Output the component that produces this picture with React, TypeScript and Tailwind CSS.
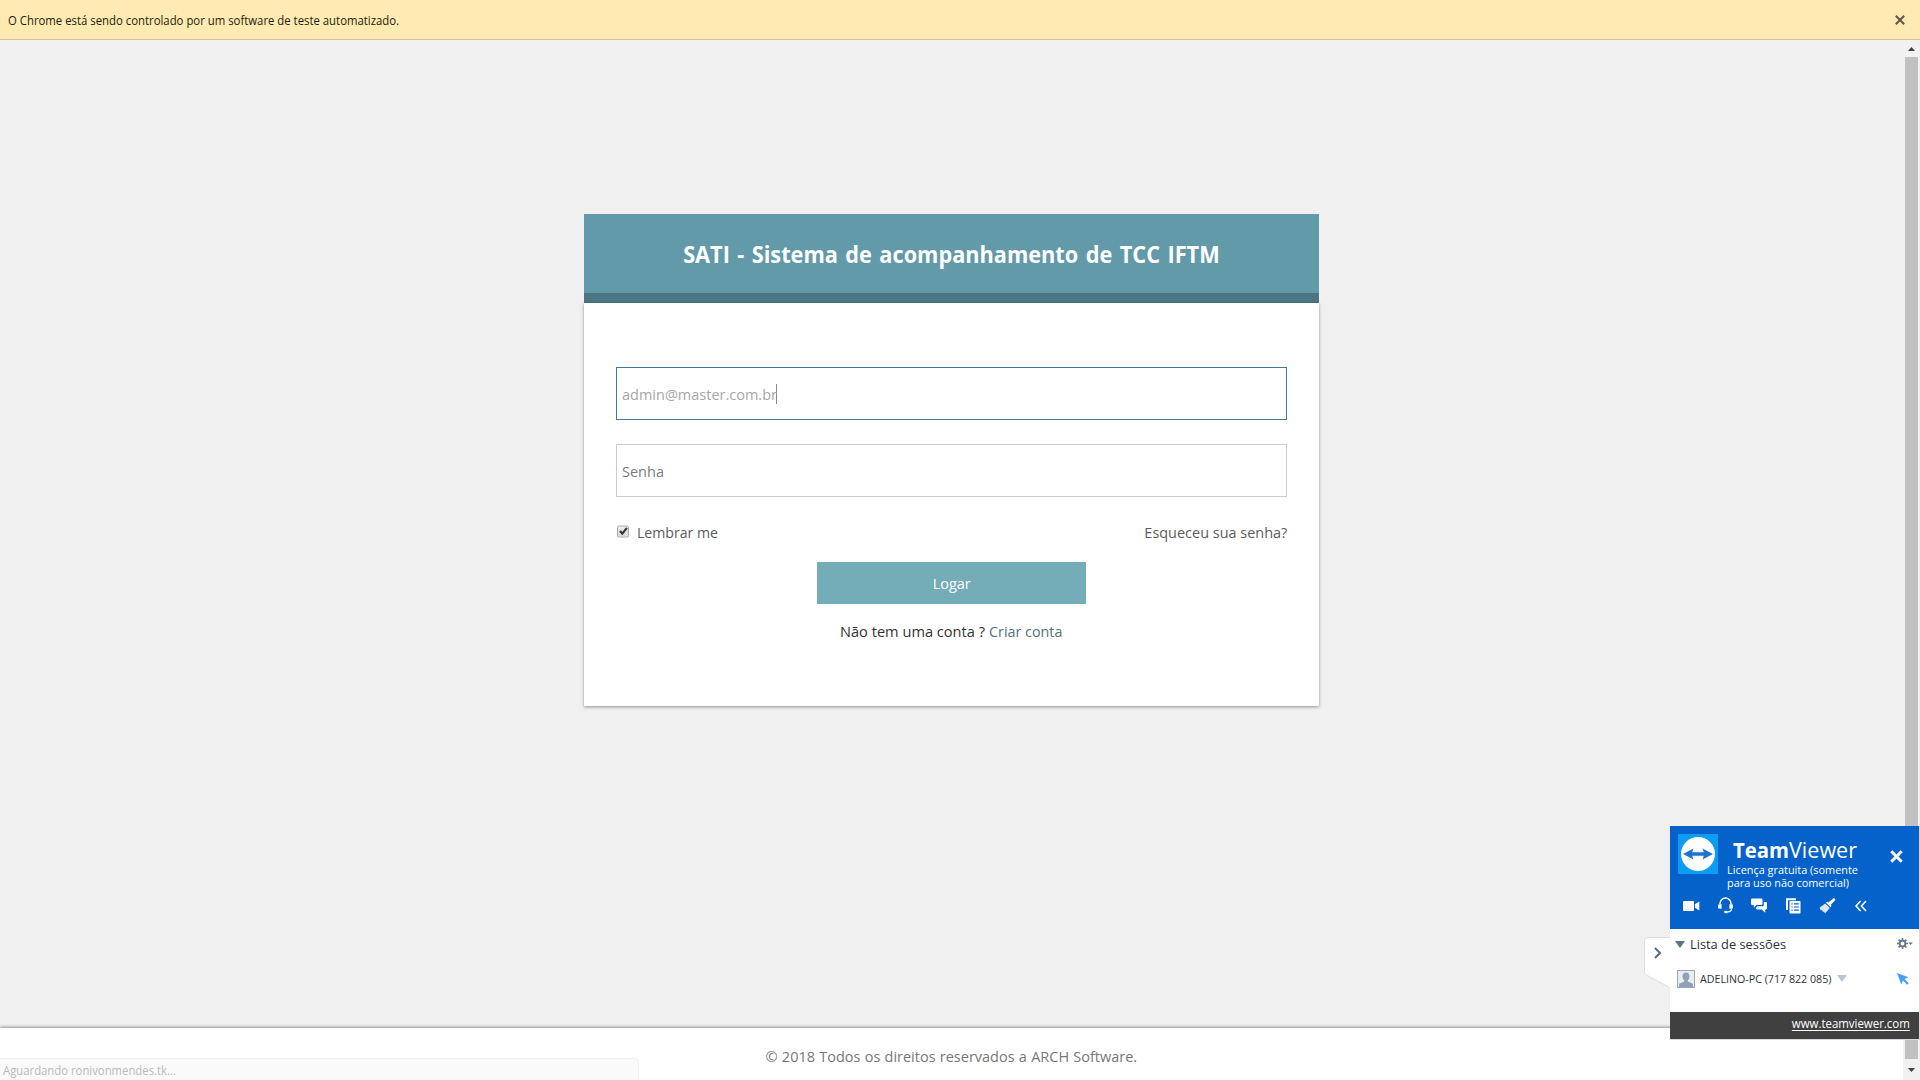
import type { ReactNode } from 'react';

function InfoBar() {
  return (
    <div className="flex h-10 shrink-0 items-center justify-between border-b border-[#cfc096] bg-[#ffeab2] pl-2 pr-[15px]">
      <span className="origin-left translate-y-px scale-x-[0.946] text-[12px] text-[#241d0c]">
        O Chrome está sendo controlado por um software de teste automatizado.
      </span>
      <svg width="10" height="10" viewBox="0 0 10 10" stroke="#5c5546" strokeWidth="2">
        <path d="M.8.8l8.4 8.4M9.2.8L.8 9.2" />
      </svg>
    </div>
  );
}

function Field({ active, children }: { active?: boolean; children: ReactNode }) {
  return (
    <div
      className={
        active
          ? 'flex h-[53px] items-center border border-[#46779a] pl-[5px] pt-px text-[15px] text-[#a6a6a6]'
          : 'flex h-[53px] items-center border border-[#cbcbcb] pl-[5px] pt-px text-[15px] text-[#7c7c7c]'
      }
    >
      {children}
    </div>
  );
}

function LoginCard() {
  return (
    <div className="w-[735px]">
      <div className="flex h-[89px] items-center justify-center border-b-10 border-[#4a7683] bg-[#639aa9]">
        <h1 className="scale-x-[0.905] whitespace-nowrap text-[24px] font-bold text-white [word-spacing:2px]">
          SATI - Sistema de acompanhamento de TCC IFTM
        </h1>
      </div>
      <div className="flex h-[403px] flex-col bg-white px-8 pt-16 shadow-[0_1px_3px_rgba(0,0,0,0.4)]">
        <Field active>
          <span className="w-[154px] origin-left scale-x-[0.966]">admin@master.com.br</span>
          <span className="h-5 w-px bg-[#8a8a8a]" />
        </Field>
        <div className="mt-6">
          <Field>
            <span className="origin-left scale-x-[0.968]">Senha</span>
          </Field>
        </div>
        <div className="mt-[25px] flex h-[21px] items-center text-[15px] text-[#5c5c5c]">
          <span className="mr-[9px] flex size-3 -translate-y-[1.5px] translate-x-px items-center justify-center rounded-[2px] border border-[#a5a5a5] bg-linear-to-b from-[#ededed] to-[#dadada]">
            <svg width="9" height="9" viewBox="0 0 9 9" className="shrink-0" fill="none" stroke="#363636" strokeWidth="2.2">
              <path d="M1 4.6l2.3 2.5L7.9 1.4" />
            </svg>
          </span>
          <span className="origin-left scale-x-[0.941]">Lembrar me</span>
          <span className="ml-auto origin-right scale-x-[0.964]">Esqueceu sua senha?</span>
        </div>
        <div className="mt-[19px] flex h-[42px] w-[269px] items-center justify-center self-center bg-[#74acb7] text-[15px] text-white">
          <span className="scale-x-[0.962]">Logar</span>
        </div>
        <div className="mt-4 flex h-[22px] w-[223px] items-center justify-between self-center whitespace-nowrap text-[15px] text-[#333]">
          <span className="w-[149px] origin-left scale-x-[0.974]">Não tem uma conta ?</span>
          <span className="w-[74px] origin-left scale-x-[0.955] text-[#56717a]">Criar conta</span>
        </div>
      </div>
    </div>
  );
}

function Scrollbar() {
  return (
    <div className="flex w-[17px] shrink-0 flex-col items-center bg-[#f1f1f1] pr-px">
      <div className="flex h-[17px] items-center">
        <svg width="7" height="4" viewBox="0 0 7 4" fill="#404040">
          <path d="M0 4h7L3.5 0z" />
        </svg>
      </div>
      <div className="w-[13px] grow bg-[#c1c1c1]" />
      <div className="flex h-[21px] items-center pt-px">
        <svg width="7" height="4" viewBox="0 0 7 4" fill="#404040">
          <path d="M0 0h7L3.5 4z" />
        </svg>
      </div>
    </div>
  );
}

function TeamViewerLogo() {
  return (
    <svg width="40" height="40" viewBox="0 0 40 40">
      <rect width="40" height="40" fill="#0b9cf4" />
      <circle cx="20" cy="20" r="17" fill="#fff" />
      <path d="M5 20l10.5-5.5-1.3 3.8h11.6l-1.3-3.8L35 20l-10.5 5.5 1.3-3.8H14.2l1.3 3.8z" fill="#1d74cf" />
    </svg>
  );
}

function Toolbar() {
  return (
    <div className="flex items-center text-white">
      <svg width="17" height="16" viewBox="0 0 17 16" fill="currentColor">
        <rect x="0" y="3" width="11" height="10" rx="1" />
        <path d="M12 6.2L16.3 3.6v8.8L12 9.8z" />
      </svg>
      <svg width="17" height="17" viewBox="0 0 17 17" className="ml-[17px]" fill="none" stroke="currentColor">
        <path d="M3 7.5V6.6a5.5 5.5 0 0111 0v.9" strokeWidth="1.5" />
        <path d="M2 7.5v4M15 7.5v4M3.7 7.2v4.6M13.3 7.2v4.6" strokeWidth="1.8" />
        <path d="M14.6 11.5c0 2-1.6 3.3-4.2 3.5" strokeWidth="1.2" />
        <ellipse cx="9" cy="15" rx="1.9" ry="1.3" fill="currentColor" stroke="none" />
      </svg>
      <svg width="17" height="16" viewBox="0 0 17 16" className="ml-[17px]" fill="currentColor">
        <path d="M1.2.5h9.1c.7 0 1.2.5 1.2 1.2v4.1c0 .7-.5 1.2-1.2 1.2H5.5L2.8 9.7V7H1.2C.5 7 0 6.5 0 5.8V1.7C0 1 .5.5 1.2.5z" />
        <path d="M12.8 4h2c.7 0 1.2.5 1.2 1.2v5.1c0 .7-.5 1.2-1.2 1.2h-.6v3.2l-3.4-3.2H6.2C5.500 11.500 5 11 5 10.300V9.800L6.500 8.300h4.800c.9 0 1.500-.6 1.500-1.500z" />
      </svg>
      <svg width="15" height="16" viewBox="0 0 15 16" className="ml-[18px]">
        <path d="M1 12V1.200h9" fill="none" stroke="currentColor" strokeWidth="2" />
        <rect x="3.5" y="3" width="11" height="12.5" rx="0.8" fill="currentColor" />
        <path d="M5.500 5.800h1.200M8 5.800h4.800M5.500 9h1.200M8 9h4.800M5.500 12.200h1.200M8 12.200h4.800" stroke="#0560c8" strokeWidth="1.2" />
      </svg>
      <svg width="17" height="16" viewBox="0 0 17 16" className="ml-[18px]">
        <path d="M15.900.700c.6.600.5 1.300 0 1.800L11.600 7l1 1-1.100 1.200L7 4.700l1.200-1.100 1.100 1L14 .700c.6-.5 1.300-.5 1.900 0z" fill="currentColor" />
        <path d="M6.300 5.400l4.500 4.500L6 15.500l-1-2-1.100.5-.9-2-1.300.3L.500 9.700z" fill="#dce8f6" />
      </svg>
      <svg width="12" height="12" viewBox="0 0 12 12" className="ml-[19px]" fill="none" stroke="currentColor" strokeWidth="1.6">
        <path d="M5.600 1L1 6l4.600 5M11 1L6.400 6l4.600 5" />
      </svg>
    </div>
  );
}

function TeamViewerPanel() {
  return (
    <div className="absolute left-[1644px] top-[826px] flex">
      <svg width="26" height="52" viewBox="0 0 26 52" className="mt-[111px]" fill="none">
        <path d="M26.500.500H4A3.500 3.500 0 00.500 4v30c0 2 1 3.500 3 4.500l23 12.500z" fill="#fff" stroke="#dcdfe2" />
        <path d="M11 11l5 5-5 5" stroke="#5a6b7c" strokeWidth="2" />
      </svg>
      <div className="flex h-[214px] w-[250px] flex-col border-r border-b border-[#d9d9d9] bg-white">
        <div className="h-[103px] shrink-0 bg-[#0462ca] pl-2 pt-2 text-white">
          <div className="flex">
            <TeamViewerLogo />
            <div className="ml-[9px] w-[140px] whitespace-nowrap">
              <div className="flex h-[29px] items-center pt-px text-[22px]">
                <span className="ml-1.5 w-[56px] origin-left scale-x-[0.924] font-bold">Team</span>
                <span className="w-[67px] origin-left scale-x-[0.98]">Viewer</span>
              </div>
              <div className="text-[11px] leading-[13px]">
                <div className="origin-left scale-x-[0.991]">Licença gratuita (somente</div>
                <div className="origin-left scale-x-[0.991]">para uso não comercial)</div>
              </div>
            </div>
            <svg width="13" height="13" viewBox="0 0 13 13" className="ml-[23px] mt-4" stroke="currentColor" strokeWidth="3">
              <path d="M1.300 1.300l10.400 10.400M11.700 1.300L1.300 11.700" />
            </svg>
          </div>
          <div className="ml-[5px] mt-[8px]">
            <Toolbar />
          </div>
        </div>
        <div className="flex h-[31px] items-center pl-[5px] pr-[6px] text-[13px] text-[#2b3138]">
          <svg width="10" height="7" viewBox="0 0 10 7" fill="#5d7389">
            <path d="M0 0h10L5 7z" />
          </svg>
          <span className="ml-[5px] origin-left scale-x-[0.987]">Lista de sessões</span>
          <svg width="16" height="11" viewBox="0 0 16 11" className="ml-auto -translate-y-px">
            <circle cx="5.5" cy="5.5" r="2.9" fill="none" stroke="#66788a" strokeWidth="1.9" />
            <path
              d="M5.500 0v2.500M5.500 8.500V11M0 5.500h2.500M8.500 5.500H11M1.600 1.600l1.800 1.800M7.600 7.600l1.800 1.800M1.600 9.400l1.800-1.800M7.600 3.400l1.800-1.800"
              stroke="#66788a"
              strokeWidth="1.7"
            />
            <path d="M11.500 4.500h4.300l-2.200 2.500z" fill="#66788a" />
          </svg>
        </div>
        <div className="mt-[9px] flex h-[20px] items-center pl-[7px] pr-[10px] text-[11.5px] text-[#2b3138]">
          <svg width="18" height="18" viewBox="0 0 18 18">
            <rect x="0.5" y="0.5" width="17" height="17" fill="#e9edf1" stroke="#9aa9b7" />
            <path d="M9 2.500c2.200 0 3.500 1.600 3.500 3.900 0 1.700-.7 3-1.700 3.800v1.300l4.100 1.700c.9.400 1.100 1 1.100 1.800v2H2v-2c0-.8.2-1.400 1.100-1.800l4.100-1.700v-1.300C6.200 9.400 5.500 8.100 5.500 6.400c0-2.300 1.300-3.900 3.500-3.900z" fill="#8fa2b5" />
          </svg>
          <span className="ml-[5px] w-[131px] origin-left scale-x-[0.928] whitespace-nowrap">ADELINO-PC (717 822 085)</span>
          <svg width="10" height="7" viewBox="0 0 10 7" className="ml-[6px] -translate-y-px" fill="#bcc5cd">
            <path d="M0 0h10L5 7z" />
          </svg>
          <svg width="12" height="12" viewBox="0 0 12 12" className="ml-auto" fill="#46a0f5">
            <path d="M0 0l11.500 4.300-4 1.700 4.200 4.200-1.500 1.500L6 7.500l-1.700 4z" />
          </svg>
        </div>
        <div className="mt-auto flex h-[27px] items-center justify-end bg-[#404040] pr-[9px]">
          <span className="origin-right -translate-y-[2px] scale-x-[0.953] text-[12px] text-white underline underline-offset-2">www.teamviewer.com</span>
        </div>
      </div>
    </div>
  );
}

export default function App() {
  return (
    <div className="relative flex h-[1080px] w-[1920px] flex-col overflow-hidden bg-[#f0f0f0] font-['Open_Sans','Noto_Sans',sans-serif]">
      <InfoBar />
      <div className="flex grow">
        <div className="flex w-[1903px] flex-col">
          <div className="flex grow justify-center pt-[174px]">
            <LoginCard />
          </div>
          <div className="flex h-[52px] shrink-0 items-center justify-center bg-white pt-1 text-[15px] text-[#777] shadow-[0_-1px_3px_rgba(0,0,0,0.4)]">
            <span className="scale-x-[0.966] [word-spacing:0.500px]">© 2018 Todos os direitos reservados a ARCH Software.</span>
          </div>
        </div>
        <Scrollbar />
      </div>
      <div className="absolute bottom-0 left-0 flex h-[22px] w-[639px] items-center rounded-tr border-r border-t border-[#f1f1f1] bg-[#fafafa] pl-[3px] pt-[2px] text-[12px] text-[#b9b9b9]">
        <span className="origin-left scale-x-[0.943]">Aguardando ronivonmendes.tk...</span>
      </div>
      <TeamViewerPanel />
    </div>
  );
}
